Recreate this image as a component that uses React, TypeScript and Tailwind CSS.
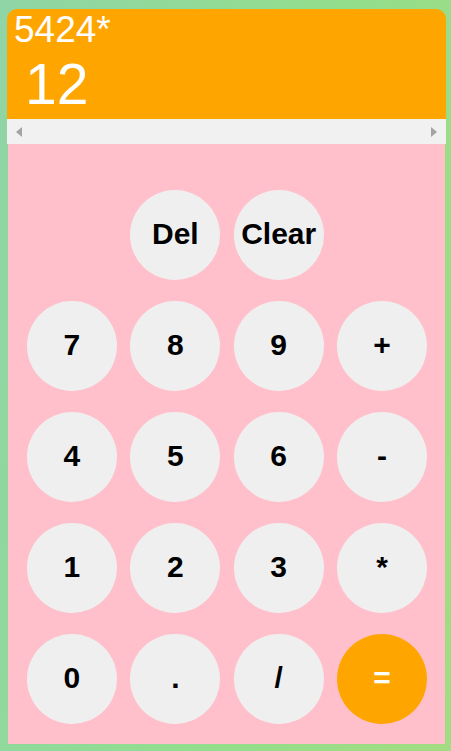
import React from 'react';

const rows: (string | null)[][] = [
  [null, 'Del', 'Clear', null],
  ['7', '8', '9', '+'],
  ['4', '5', '6', '-'],
  ['1', '2', '3', '*'],
  ['0', '.', '/', '='],
];

function Key({ label }: { label: string | null }) {
  if (!label) return <div className="w-[90px] h-[90px]" />;
  const isEq = label === '=';
  return (
    <button
      className={
        'w-[90px] h-[90px] rounded-full flex items-center justify-center pb-[4px] text-[30px] font-bold ' +
        (isEq ? 'bg-[#ffa500] text-white' : 'bg-[#efefef] text-black')
      }
    >
      {label}
    </button>
  );
}

export default function App() {
  return (
    <div
      className="min-h-[751px] w-full pt-[9px] pl-[7px] pr-[5px] pb-[7px] bg-[linear-gradient(100deg,#8fd5a6,#93de8c_60%,#a3dc82)]"
      style={{ fontFamily: '"Liberation Sans", Arial, sans-serif' }}
    >
      <div className="w-[439px] flex flex-col">
        <div className="bg-[#ffa500] rounded-t-[10px] h-[110px] text-white pl-[7px] pt-[1px]">
          <div className="text-[37px] leading-[40px]">5424*</div>
          <div className="text-[57px] leading-[64px] pl-[11px] mt-[2px]">12</div>
        </div>
        <div className="h-[25px] bg-[#f1f1f1] flex items-center justify-between px-[9px]">
          <svg width="6" height="10" viewBox="0 0 6 10">
            <path d="M6 0 L0 5 L6 10 Z" fill="#a3a3a3" />
          </svg>
          <svg width="6" height="10" viewBox="0 0 6 10">
            <path d="M0 0 L6 5 L0 10 Z" fill="#a3a3a3" />
          </svg>
        </div>
        <div className="bg-[#ffc0cb] mx-[1px] h-[600px] pt-[46px] pl-[19px] pr-[18px] flex flex-col gap-[21px]">
          {rows.map((r, i) => (
            <div key={i} className="flex gap-[13.5px]">
              {r.map((k, j) => (
                <Key key={j} label={k} />
              ))}
            </div>
          ))}
        </div>
      </div>
    </div>
  );
}
